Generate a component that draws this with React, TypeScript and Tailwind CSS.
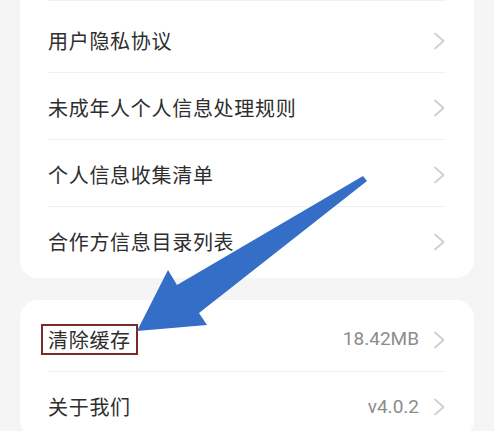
import React from "react"

type Row = { label: string; value?: string; boxed?: boolean }

const TOP_ROWS: Row[] = [
  { label: "用户隐私协议" },
  { label: "未成年人个人信息处理规则" },
  { label: "个人信息收集清单" },
  { label: "合作方信息目录列表" },
]

const BOTTOM_ROWS: Row[] = [
  { label: "清除缓存", value: "18.42MB", boxed: true },
  { label: "关于我们", value: "v4.0.2" },
]

function Chevron() {
  return (
    <svg width="13" height="18" viewBox="0 0 13 18" fill="none" className="shrink-0">
      <path d="M2 1.5 L10.5 9 L2 16.5" stroke="#cfcfcf" strokeWidth="1.8" strokeLinecap="round" strokeLinejoin="round" />
    </svg>
  )
}

function SettingRow({ row, first }: { row: Row; first: boolean }) {
  return (
    <div className={`flex h-[67px] items-center ${first ? "" : "border-t border-[#f1f1f1]"}`}>
      <span className="flex-1 pt-[4px]">
        <span
          className={`text-[20px] tracking-[0.7px] text-[#2e2e2e] ${
            row.boxed ? "-ml-[7px] inline-block border-2 border-[#7b2a2a] px-[5px] leading-[27px]" : ""
          }`}
        >
          {row.label}
        </span>
      </span>
      {row.value && (
        <span className="mr-[14px] pt-[4px] font-['Roboto',sans-serif] text-[19px] text-[#8c8c8c]">{row.value}</span>
      )}
      <span className="pt-[4px]">
        <Chevron />
      </span>
    </div>
  )
}

export default function App() {
  return (
    <div className="relative h-[431px] w-[494px] overflow-hidden bg-[#f5f5f5] font-['Noto_Sans_CJK_SC',sans-serif]">
      {/* 协议列表 */}
      <div className="mx-[20px] rounded-b-[18px] bg-white px-[28px] pb-[5px]">
        <div className="border-t border-[#f1f1f1] pt-[4px]">
          {TOP_ROWS.map((r, i) => (
            <SettingRow key={r.label} row={r} first={i === 0} />
          ))}
        </div>
      </div>

      {/* 缓存 / 关于 */}
      <div className="mx-[20px] mt-[22px] rounded-[18px] bg-white px-[28px] pt-[4px]">
        {BOTTOM_ROWS.map((r, i) => (
          <SettingRow key={r.label} row={r} first={i === 0} />
        ))}
      </div>

      {/* 标注箭头 */}
      <svg className="pointer-events-none absolute inset-0" width="494" height="431" viewBox="0 0 494 431">
        <polygon
          points="363,176 177,285 168,270 137,331 207,325 199,313 367,181"
          fill="#356ec6"
        />
      </svg>
    </div>
  )
}
